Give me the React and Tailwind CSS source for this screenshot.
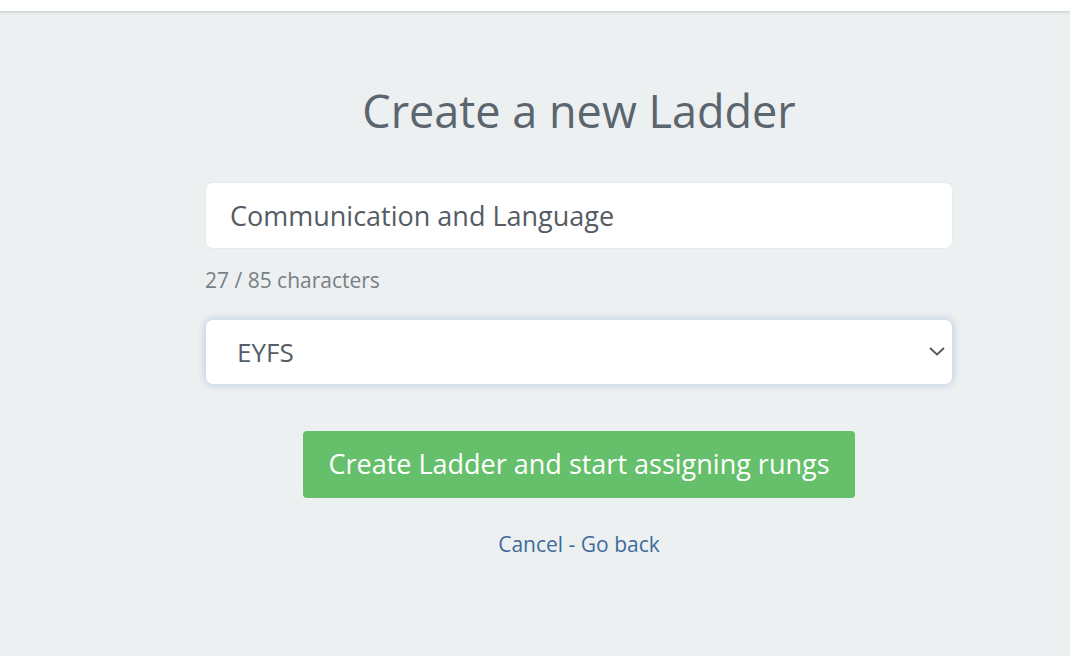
import React, { useState } from 'react';

const App = () => {
    const [name, setName] = useState('Communication and Language');
    const [stage, setStage] = useState('EYFS');

    return (
        <div className="min-h-screen bg-[#ecf0f1] font-['Open_Sans',sans-serif]">
            {/* Top bar */}
            <div className="h-[11px] bg-white shadow-[0_1px_3px_rgba(0,0,0,0.18)] relative z-10"></div>

            <div className="flex">
                <div className="ml-[205px] w-[748px] pt-[73px] pb-20 flex flex-col">
                    <h1 className="text-[45px] leading-[54px] text-center text-[#5b656e] font-normal">
                        Create a new Ladder
                    </h1>

                    <input
                        value={name}
                        onChange={(e) => setName(e.target.value)}
                        className="mt-[44px] h-[67px] w-full bg-white rounded-lg border border-[#e6eaed] px-6 text-[27px] text-[#555c63] outline-none"
                    />
                    <p className="mt-[17px] text-[21px] leading-7 text-[#7a7f84]">
                        27 / 85 characters
                    </p>

                    <div className="relative mt-[25px]">
                        <select
                            value={stage}
                            onChange={(e) => setStage(e.target.value)}
                            className="appearance-none h-[66px] w-full bg-white rounded-lg border border-[#d6e0ec] pl-[31px] text-[26px] text-[#555c63] outline-none shadow-[0_0_7px_rgba(120,150,200,0.45)]"
                        >
                            <option>EYFS</option>
                            <option>KS1</option>
                            <option>KS2</option>
                        </select>
                        <svg
                            className="absolute right-[7px] top-[26px] pointer-events-none"
                            width="18"
                            height="12"
                            viewBox="0 0 18 12"
                            fill="none"
                        >
                            <path d="M2 3l7 6.5L16 3" stroke="#555" strokeWidth="1.8" />
                        </svg>
                    </div>

                    <button className="mt-[46px] self-center w-[552px] h-[67px] rounded bg-[#66bf6b] text-white text-[27px]">
                        Create Ladder and start assigning rungs
                    </button>

                    <a href="#" className="mt-[32px] self-center text-[21px] leading-7 text-[#3f6b9c]">
                        Cancel - Go back
                    </a>
                </div>
            </div>
        </div>
    );
};

export default App;
